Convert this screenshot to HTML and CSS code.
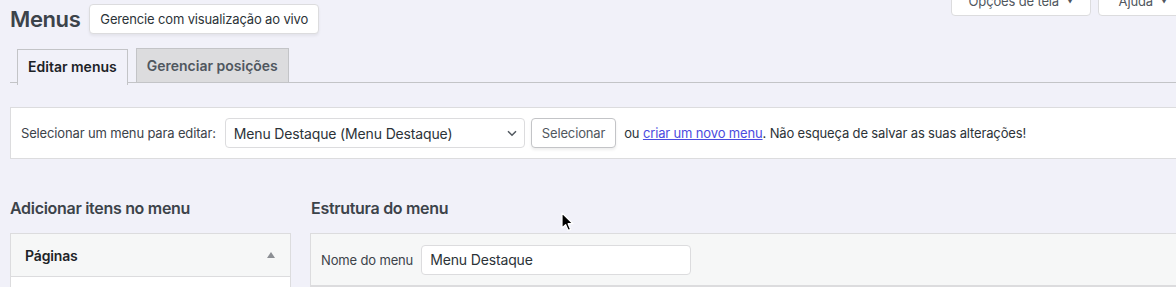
FILE: index.html
```html
<!DOCTYPE html>
<html lang="pt-BR">
<head>
    <meta charset="UTF-8">
    <meta name="viewport" content="width=device-width, initial-scale=1.0">
    <title>Menus</title>
    <link rel="stylesheet" href="styles.css">
</head>
<body>
    <div class="screen-meta">
        <button class="meta-btn">Opções de tela <span class="caret">▼</span></button>
        <button class="meta-btn help">Ajuda <span class="caret">▼</span></button>
    </div>

    <div class="wrap">
        <div class="title-row">
            <h1>Menus</h1>
            <button class="title-action">Gerencie com visualização ao vivo</button>
        </div>

        <nav class="tabs">
            <a class="tab active">Editar menus</a>
            <a class="tab">Gerenciar posições</a>
        </nav>

        <div class="manage-menus">
            <label>Selecionar um menu para editar:</label>
            <div class="select">
                <span>Menu Destaque (Menu Destaque)</span>
                <svg width="12" height="12" viewBox="0 0 12 12"><path d="M2 4.2l4 4 4-4" fill="none" stroke="#50575e" stroke-width="1.5"/></svg>
            </div>
            <button class="btn">Selecionar</button>
            <span class="hint">ou <a href="#">criar um novo menu</a>. Não esqueça de salvar as suas alterações!</span>
        </div>

        <div class="columns">
            <div class="col-left">
                <h2>Adicionar itens no menu</h2>
                <div class="box">
                    <div class="box-head">
                        <span>Páginas</span>
                        <span class="arrow"></span>
                    </div>
                    <div class="box-body"></div>
                </div>
            </div>
            <div class="col-right">
                <h2>Estrutura do menu</h2>
                <div class="menu-edit">
                    <div class="menu-head">
                        <label>Nome do menu</label>
                        <div class="name-input">Menu Destaque</div>
                    </div>
                </div>
            </div>
        </div>
    </div>

    <svg class="cursor" width="14" height="20" viewBox="0 0 14 20">
        <path d="M1 1v15l3.6-3.4 2.6 5.8 2.4-1-2.5-5.7H12z" fill="#000" stroke="#fff" stroke-width="1.2" stroke-linejoin="round"/>
    </svg>
</body>
</html>
```

FILE: styles.css
```css
body {
    margin: 0;
    background: #f1f1f9;
    font-family: Inter, "Noto Sans", sans-serif;
    font-size: 13px;
    letter-spacing: -0.15px;
    color: #3c434a;
    overflow: hidden;
    width: 1176px;
    height: 287px;
    position: relative;
}
.wrap {
    width: 1220px;
    padding-left: 10px;
}
.screen-meta {
    position: absolute;
    top: -14px;
    left: 951px;
    display: flex;
    gap: 7px;
}
.meta-btn {
    font-family: inherit;
    font-size: 13px;
    letter-spacing: -0.15px;
    color: #50575e;
    background: #fff;
    border: 1px solid #dcdcde;
    border-radius: 0 0 4px 4px;
    height: 30px;
    width: 140px;
    padding: 0 12px;
    text-align: center;
}
.meta-btn.help {
    width: 90px;
}
.caret {
    font-size: 7px;
    vertical-align: 2px;
    margin-left: 4px;
}
.title-row {
    display: flex;
    align-items: center;
    gap: 9px;
    height: 38px;
}
h1 {
    margin: 0;
    font-size: 22px;
    font-weight: 600;
    color: #3c434a;
    letter-spacing: -0.4px;
}
.title-action {
    font-family: inherit;
    font-size: 13px;
    letter-spacing: -0.15px;
    color: #2c3338;
    background: #fff;
    border: 1px solid #dcdcde;
    border-radius: 4px;
    height: 30px;
    padding: 0 10px;
    box-shadow: 0 2px 3px rgba(0, 0, 0, 0.06);
}
.tabs {
    display: flex;
    gap: 8px;
    padding-left: 7px;
    margin-top: 10px;
    border-bottom: 1px solid #c3c4c7;
    height: 34px;
}
.tab {
    display: block;
    font-size: 14px;
    font-weight: 600;
    letter-spacing: 0;
    line-height: 24px;
    padding: 5px 10px;
    border: 1px solid #c3c4c7;
    border-bottom: none;
    background: #dcdcde;
    color: #50575e;
}
.tab.active {
    background: #f1f1f9;
    color: #1d2327;
    height: 25px;
    position: relative;
    top: 1px;
}
.manage-menus {
    margin-top: 24px;
    background: #fff;
    border: 1px solid #dcdcde;
    height: 50px;
    display: flex;
    align-items: center;
    padding-left: 10px;
}
.manage-menus label {
    margin-right: 9px;
}
.select {
    display: flex;
    align-items: center;
    justify-content: space-between;
    padding: 0 6px 0 8px;
    box-sizing: border-box;
    width: 300px;
    height: 30px;
    border: 1px solid #dcdcde;
    border-radius: 4px;
    font-size: 14px;
    color: #2c3338;
}
.btn {
    font-family: inherit;
    font-size: 13px;
    letter-spacing: -0.15px;
    color: #50575e;
    background: #fff;
    border: 1px solid #c3c4c7;
    border-radius: 4px;
    height: 30px;
    padding: 0 10px;
    margin-left: 6px;
    box-shadow: 0 2px 3px rgba(0, 0, 0, 0.07);
}
.hint {
    margin-left: 8px;
    color: #2c3338;
}
.hint a {
    color: #4b4be0;
}
.columns {
    display: flex;
    margin-top: 39px;
}
.col-left {
    width: 281px;
}
.col-right {
    margin-left: 19px;
    flex: 1;
}
h2 {
    margin: 0 0 15px 0;
    font-size: 16px;
    font-weight: 600;
    color: #3c434a;
    letter-spacing: -0.3px;
    line-height: 20px;
}
.col-right h2 {
    margin-left: 1px;
}
.box {
    border: 1px solid #dcdcde;
    background: #fff;
}
.box-head {
    background: #f6f7f7;
    height: 42px;
    border-bottom: 1px solid #dcdcde;
    display: flex;
    align-items: center;
    justify-content: space-between;
    padding: 0 15px 0 14px;
    font-size: 14px;
    font-weight: 600;
    color: #1d2327;
}
.arrow {
    width: 0;
    height: 0;
    border-left: 4px solid transparent;
    border-right: 4px solid transparent;
    border-bottom: 6px solid #8c8f94;
}
.box-body {
    height: 40px;
}
.menu-edit {
    border: 1px solid #dcdcde;
    background: #f6f7f7;
}
.menu-head {
    height: 51px;
    border-bottom: 1px solid #dcdcde;
    display: flex;
    align-items: center;
    padding-left: 10px;
}
.menu-head label {
    margin-right: 8px;
}
.name-input {
    width: 270px;
    height: 30px;
    box-sizing: border-box;
    background: #fff;
    border: 1px solid #dcdcde;
    border-radius: 4px;
    padding-left: 8px;
    display: flex;
    align-items: center;
    font-size: 14px;
    color: #2c3338;
}
.cursor {
    position: absolute;
    left: 561px;
    top: 212px;
}
```
